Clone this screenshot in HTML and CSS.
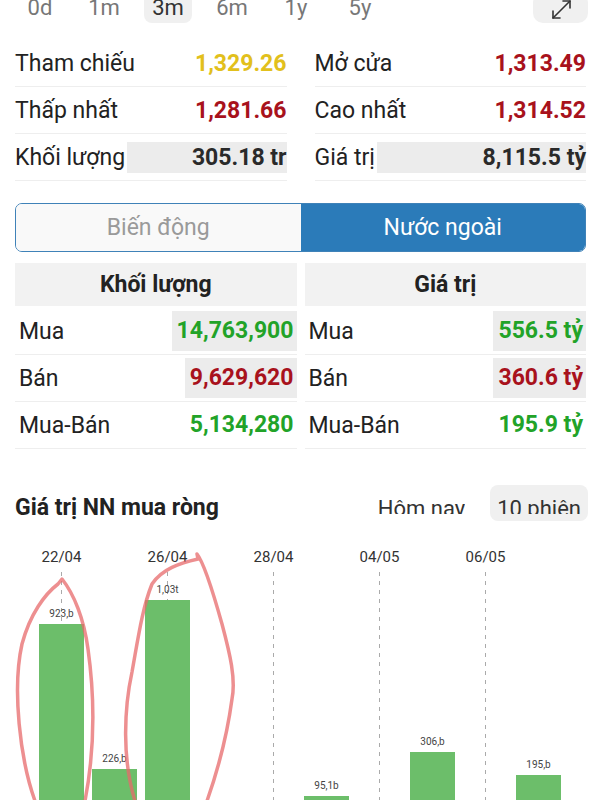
FILE: index.html
```html
<!DOCTYPE html>
<html lang="vi">
<head>
    <meta charset="UTF-8">
    <meta name="viewport" content="width=device-width, initial-scale=1.0">
    <title>Chỉ số - Nước ngoài</title>
    <link rel="stylesheet" href="styles.css">
</head>
<body>
    <div class="periods">
        <span class="period">0d</span>
        <span class="period">1m</span>
        <span class="period active">3m</span>
        <span class="period">6m</span>
        <span class="period">1y</span>
        <span class="period">5y</span>
        <span class="expand">
            <svg width="24" height="24" viewBox="0 0 24 24" fill="none" stroke="#333" stroke-width="1.6" stroke-linecap="round" stroke-linejoin="round">
                <path d="M4 21 L21 4"/>
                <path d="M14 4 H21 V11"/>
                <path d="M4 14 V21 H11"/>
            </svg>
        </span>
    </div>

    <section class="stats">
        <div class="stat"><span class="stat-label">Tham chiếu</span><span class="stat-value yellow">1,329.26</span></div>
        <div class="stat"><span class="stat-label">Mở cửa</span><span class="stat-value red">1,313.49</span></div>
        <div class="stat"><span class="stat-label">Thấp nhất</span><span class="stat-value red">1,281.66</span></div>
        <div class="stat"><span class="stat-label">Cao nhất</span><span class="stat-value red">1,314.52</span></div>
        <div class="stat"><span class="stat-label">Khối lượng</span><span class="stat-value fill">305.18 tr</span></div>
        <div class="stat"><span class="stat-label">Giá trị</span><span class="stat-value fill">8,115.5 tỷ</span></div>
    </section>

    <div class="switch">
        <span class="tab">Biến động</span>
        <span class="tab active">Nước ngoài</span>
    </div>

    <section class="foreign">
        <div class="ft-col">
            <div class="ft-head">Khối lượng</div>
            <div class="ft-row"><span>Mua</span><span class="ft-value green shade">14,763,900</span></div>
            <div class="ft-row"><span>Bán</span><span class="ft-value red shade">9,629,620</span></div>
            <div class="ft-row"><span>Mua-Bán</span><span class="ft-value green">5,134,280</span></div>
        </div>
        <div class="ft-col">
            <div class="ft-head">Giá trị</div>
            <div class="ft-row"><span>Mua</span><span class="ft-value green shade">556.5 tỷ</span></div>
            <div class="ft-row"><span>Bán</span><span class="ft-value red shade">360.6 tỷ</span></div>
            <div class="ft-row"><span>Mua-Bán</span><span class="ft-value green">195.9 tỷ</span></div>
        </div>
    </section>

    <div class="chart-head">
        <h2>Giá trị NN mua ròng</h2>
        <div class="range">
            <span class="range-item"><span class="range-text">Hôm nay</span></span>
            <span class="range-item active"><span class="range-text">10 phiên</span></span>
        </div>
    </div>

    <div class="chart-area">
        <div class="chart">
            <div class="col marked"><div class="date">22/04</div><div class="plot"><span class="bar-label">923,b</span><div class="bar" style="height: 205px"></div></div></div>
            <div class="col"><div class="date"></div><div class="plot"><span class="bar-label">226,b</span><div class="bar" style="height: 60px"></div></div></div>
            <div class="col marked"><div class="date">26/04</div><div class="plot"><span class="bar-label">1,03t</span><div class="bar" style="height: 229px"></div></div></div>
            <div class="col"><div class="date"></div><div class="plot"></div></div>
            <div class="col marked"><div class="date">28/04</div><div class="plot"></div></div>
            <div class="col"><div class="date"></div><div class="plot"><span class="bar-label">95,1b</span><div class="bar" style="height: 33px"></div></div></div>
            <div class="col marked"><div class="date">04/05</div><div class="plot"></div></div>
            <div class="col"><div class="date"></div><div class="plot"><span class="bar-label">306,b</span><div class="bar" style="height: 77px"></div></div></div>
            <div class="col marked"><div class="date">06/05</div><div class="plot"></div></div>
            <div class="col"><div class="date"></div><div class="plot"><span class="bar-label">195,b</span><div class="bar" style="height: 54px"></div></div></div>
        </div>
        <!-- hand-drawn marks over the chart -->
        <svg class="marks" width="600" height="290" viewBox="0 0 600 290" fill="none" stroke="#e86a6c" stroke-width="3.5" stroke-linecap="round" stroke-linejoin="round">
            <path d="M35 262 C20 220, 12 150, 22 105 C30 75, 45 55, 58 45 L62 40 C74 55, 84 80, 88 110 C95 160, 95 210, 85 262"/>
            <path d="M135 262 C122 220, 124 170, 132 133 C138 100, 142 70, 152 45 C162 30, 180 24, 198 20 L197 15 C205 25, 215 60, 222 85 C230 115, 236 140, 232 160 C228 190, 220 225, 207 262"/>
        </svg>
    </div>
</body>
</html>
```

FILE: styles.css
```css
html, body {
    margin: 0;
}
body {
    padding: 0 14px 0 15px;
    font-family: Roboto, "Liberation Sans", sans-serif;
    color: #222;
    background-color: white;
}
.periods {
    display: flex;
    gap: 16px;
    height: 30px;
    margin-top: -7px;
    padding-left: 1px;
}
.period {
    width: 48px;
    text-align: center;
    line-height: 30px;
    font-size: 22px;
    color: #777;
}
.period.active {
    background-color: #f0f0f0;
    border-radius: 8px;
    color: #333;
}
.expand {
    margin-left: auto;
    margin-right: -2px;
    width: 55px;
    background-color: #f0f0f0;
    border-radius: 10px;
    display: flex;
    align-items: flex-end;
    justify-content: center;
    padding-bottom: 2px;
    box-sizing: border-box;
}
.stats {
    display: grid;
    grid-template-columns: 1fr 1fr;
    column-gap: 28px;
    margin-top: 17px;
}
.stat {
    display: flex;
    align-items: center;
    justify-content: space-between;
    height: 46px;
    border-bottom: 1px solid #eee;
    font-size: 23px;
}
.stat-value {
    font-weight: 700;
}
.stat-value.fill {
    flex: 1;
    margin-left: 2px;
    height: 31px;
    line-height: 31px;
    text-align: right;
    background-color: #ececec;
    color: #2a2a2a;
}
.yellow { color: #e2c01c; }
.red { color: #a8121c; }
.green { color: #22a328; }

.switch {
    display: flex;
    margin-top: 22px;
    border: 1px solid #3f82b8;
    border-radius: 7px;
    overflow: hidden;
}
.tab {
    flex: 1;
    text-align: center;
    line-height: 47px;
    font-size: 23px;
    color: #9a9a9a;
    background-color: #f9f9f9;
}
.tab.active {
    background-color: #2b7bb9;
    color: white;
}
.foreign {
    display: grid;
    grid-template-columns: 1fr 1fr;
    column-gap: 8px;
    margin-top: 11px;
}
.ft-head {
    height: 43px;
    line-height: 43px;
    text-align: center;
    font-size: 23px;
    font-weight: 700;
    background-color: #f2f2f2;
    margin-bottom: 2px;
}
.ft-row {
    display: flex;
    align-items: center;
    justify-content: space-between;
    height: 46px;
    padding-left: 4px;
    border-bottom: 1px solid #eee;
    font-size: 23px;
}
.ft-value {
    font-weight: 700;
    height: 40px;
    line-height: 40px;
    padding: 0 3px 0 5px;
}
.ft-value.shade {
    background-color: #ececec;
}
.chart-head {
    display: flex;
    align-items: center;
    justify-content: space-between;
    margin-top: 36px;
    height: 36px;
}
.chart-head h2 {
    margin: 8px 0 0;
    font-size: 23px;
    font-weight: 700;
    color: #222;
}
.range {
    display: flex;
    gap: 18px;
    margin-right: -2px;
}
.range-item {
    height: 36px;
    padding: 0 7px;
    border-radius: 8px;
    font-size: 22px;
    color: #333;
}
.range-item.active {
    background-color: #f0f0f0;
}
.range-text {
    display: block;
    height: 29px;
    padding-top: 11px;
    box-sizing: border-box;
    line-height: 26px;
    overflow: hidden;
}
.chart-area {
    position: relative;
    margin: 18px -14px 0 -15px;
    padding-left: 35px;
    height: 290px;
}
.chart {
    display: grid;
    grid-template-columns: repeat(10, 53px);
    height: 100%;
}
.col {
    display: flex;
    flex-direction: column;
    align-items: center;
}
.date {
    height: 33px;
    line-height: 36px;
    font-size: 15px;
    color: #333;
}
.plot {
    flex: 1;
    width: 100%;
    display: flex;
    flex-direction: column;
    justify-content: flex-end;
    align-items: center;
}
.col.marked .plot {
    background: repeating-linear-gradient(to bottom, #aaa 0 4px, transparent 4px 9px) center top / 1px 100% no-repeat;
}
.bar-label {
    font-size: 10px;
    line-height: 12px;
    color: #444;
    margin-bottom: 4px;
}
.bar {
    width: 45px;
    background-color: #6cbe6a;
}
.marks {
    position: absolute;
    top: 0;
    left: 0;
    opacity: 0.75;
    pointer-events: none;
}
```
